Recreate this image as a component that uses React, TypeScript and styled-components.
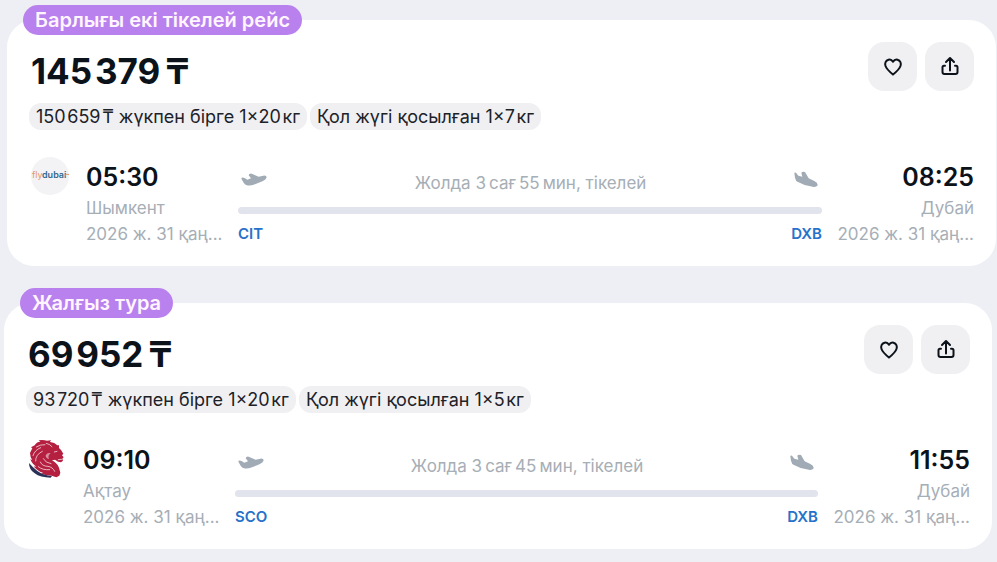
import React from 'react';
import styled, { createGlobalStyle } from 'styled-components';

const GlobalStyle = createGlobalStyle`
  * { box-sizing: border-box; }
  body {
    margin: 0;
    background: #eeeff4;
    color: #0c1219;
    font-family: Inter, "Liberation Sans", sans-serif;
  }
`;

const Results = styled.main`
  display: flex;
  flex-direction: column;
  gap: 37px;
  padding: 20px 0 12px;
`;

const Card = styled.article<{ $left: number; $right: number }>`
  position: relative;
  margin: 0 ${(p) => p.$right}px 0 ${(p) => p.$left}px;
  padding: 22px 22px 19px;
  border-radius: 27px;
  background: #fff;
`;

const Badge = styled.span`
  position: absolute;
  top: -15px;
  left: 16px;
  padding: 0 12px;
  border-radius: 15px;
  background: #b881ee;
  color: #fff5ff;
  font-size: 20px;
  font-weight: 600;
  line-height: 30px;
  white-space: nowrap;
`;

const Header = styled.header`
  display: flex;
  justify-content: space-between;
  align-items: flex-start;
`;

const Price = styled.h2`
  margin: 0 0 3px 2px;
  font-size: 35px;
  font-weight: 700;
  line-height: 58px;
  white-space: nowrap;
`;

const Chips = styled.div`
  display: flex;
  gap: 3px;
`;

const Chip = styled.span`
  padding: 0 7px;
  border-radius: 12px;
  background: #f0f0f3;
  color: #1d2228;
  font-size: 18px;
  line-height: 27px;
  white-space: nowrap;
`;

const Actions = styled.div`
  display: flex;
  gap: 8px;
`;

const ActionButton = styled.button`
  display: flex;
  align-items: center;
  justify-content: center;
  width: 49px;
  height: 49px;
  padding: 0;
  border: 0;
  border-radius: 16px;
  background: #f0f0f3;
  color: #0c1219;
  cursor: pointer;
`;

const Segment = styled.div`
  display: grid;
  grid-template-columns: 38px 140px minmax(0, 1fr) 140px;
  column-gap: 12px;
  margin: 27px 0 0 2px;
`;

const Logo = styled.div`
  height: 38px;
  svg { display: block; }
`;

const Stop = styled.div<{ $end?: boolean }>`
  display: flex;
  flex-direction: column;
  align-items: ${(p) => (p.$end ? 'flex-end' : 'flex-start')};
  padding: 2px 0 0 ${(p) => (p.$end ? 0 : 5)}px;
  white-space: nowrap;
`;

const Time = styled.time`
  font-size: 25px;
  font-weight: 600;
  line-height: 36px;
`;

const Detail = styled.span`
  color: #a6aeb6;
  font-size: 17px;
  line-height: 26px;
`;

const Track = styled.div`
  padding: 2px 0 0 5px;
`;

const TrackTop = styled.div`
  display: flex;
  align-items: center;
  justify-content: space-between;
  height: 48px;
  padding: 0 4px 0 3px;
  color: #a1abb5;
  svg { display: block; }
`;

const Duration = styled.span`
  color: #a6aeb6;
  font-size: 17px;
  white-space: nowrap;
`;

const Bar = styled.div`
  height: 7px;
  margin-bottom: 7px;
  border-radius: 4px;
  background: #e1e4ec;
`;

const Codes = styled.div`
  display: flex;
  justify-content: space-between;
  color: #2672ca;
  font-size: 15px;
  font-weight: 600;
  line-height: 26px;
`;

const HeartIcon = () => (
  <svg width="22" height="22" viewBox="0 0 22 22" fill="none" stroke="currentColor" strokeWidth="2" strokeLinejoin="round" aria-hidden="true">
    <path d="M11 5.8C9.9 4 8.2 3.2 6.5 3.7C3.7 4.5 2.5 7.3 3.5 10C4.8 13.4 8 16.1 11 18.6C14 16.1 17.2 13.4 18.5 10C19.5 7.3 18.3 4.5 15.5 3.7C13.8 3.2 12.1 4 11 5.8Z" />
  </svg>
);

const ShareIcon = () => (
  <svg width="22" height="22" viewBox="0 0 22 22" fill="none" stroke="currentColor" strokeWidth="2" strokeLinecap="round" strokeLinejoin="round" aria-hidden="true">
    <path d="M11 14.5V2.7M7 6L11 2L15 6M6 9.7H5C4 9.7 3.5 10.3 3.5 11.2V16C3.5 17.3 4.2 18 5.5 18H16.5C17.8 18 18.5 17.3 18.5 16V11.2C18.5 10.3 18 9.7 17 9.7H16" />
  </svg>
);

const DepartIcon = () => (
  <svg width="26" height="20" viewBox="0 0 78 60" fill="currentColor" aria-hidden="true">
    <path d="M1 17Q1 13 8 14L12 16L19 20L30 16L23 7Q24 1 32 2L53 11L67 8Q77 7 77 13Q76 19 66 24L42 34Q28 39 18 37Q12 36 8 29Z" />
  </svg>
);

const ArriveIcon = () => (
  <svg width="24" height="24" viewBox="0 0 72 72" fill="currentColor" aria-hidden="true">
    <path d="M1 7Q1 3 6 5L13 14L25 17L22 5Q25 1 33 3L44 22L61 30Q71 35 71 41Q70 47 60 48Q46 45 32 42L12 33Q5 30 3 20Z" />
  </svg>
);

const FlydubaiLogo = () => (
  <svg width="38" height="38" viewBox="0 0 38 38" role="img" aria-label="flydubai">
    <circle cx="19" cy="19" r="19" fill="#f3f3f6" />
    <text x="1" y="21" fontFamily="Inter, sans-serif" fontSize="9" fill="#e39668">fly</text>
    <text x="11" y="21" fontFamily="Inter, sans-serif" fontSize="9" fontWeight="600" fill="#34698f">dubai</text>
    <path d="M34 18.5Q35.5 16.5 38 17.5" stroke="#e39668" fill="none" />
  </svg>
);

const ScatLogo = () => (
  <svg width="38" height="38" viewBox="25 30 114 114" role="img" aria-label="SCAT">
    <path d="M31 69L38 55L34 52L45 46Q50 36 62 35L57 31Q70 29 82 32L94 31L91 36Q105 37 113 46L118 46L118 54L124 60L131 71L127 76L132 82L128 86L130 92L124 97L115 95L106 89L97 91Q112 99 118 113L122 128L119 137L110 142Q91 134 79 136L64 130L71 129Q50 122 42 109L50 110Q36 101 32 87L38 91Q31 80 31 69Z" fill="#b51f40" />
    <path d="M40 77Q45 60 63 53M48 93Q47 74 68 64M50 51Q62 43 76 44M80 40Q92 43 97 50M62 96Q67 109 85 109Q99 111 105 124M56 110Q68 121 90 119M71 86Q77 99 94 101M104 66L112 64M116 89L126 88" fill="none" stroke="#fff" strokeWidth="2" strokeLinecap="round" />
    <path d="M78 76Q85 66 93 70Q83 77 88 87Q78 86 78 76Z" fill="#fff" fillOpacity="0.5" />
    <path d="M28 99Q40 113 53 123Q72 136 97 138L93 143Q62 143 45 130Q28 119 28 99Z" fill="#2b3057" />
  </svg>
);

interface Ticket {
  badge: string;
  price: string;
  chips: string[];
  logo: React.ReactNode;
  from: { time: string; city: string; code: string };
  to: { time: string; city: string; code: string };
  duration: string;
  left: number;
  right: number;
}

const DATE = '2026 ж. 31 қаң...';

const tickets: Ticket[] = [
  {
    badge: 'Барлығы екі тікелей рейс',
    price: '145\u200a379\u2009₸',
    chips: ['150\u200a659\u200a₸ жүкпен бірге 1×20\u200aкг', 'Қол жүгі қосылған 1×7\u200aкг'],
    logo: <FlydubaiLogo />,
    from: { time: '05:30', city: 'Шымкент', code: 'CIT' },
    to: { time: '08:25', city: 'Дубай', code: 'DXB' },
    duration: 'Жолда 3\u2009сағ\u200955\u2009мин, тікелей',
    left: 7,
    right: 1,
  },
  {
    badge: 'Жалғыз тура',
    price: '69\u200a952\u2009₸',
    chips: ['93\u200a720\u200a₸ жүкпен бірге 1×20\u200aкг', 'Қол жүгі қосылған 1×5\u200aкг'],
    logo: <ScatLogo />,
    from: { time: '09:10', city: 'Ақтау', code: 'SCO' },
    to: { time: '11:55', city: 'Дубай', code: 'DXB' },
    duration: 'Жолда 3\u2009сағ\u200945\u2009мин, тікелей',
    left: 4,
    right: 5,
  },
];

const TicketCard = ({ ticket }: { ticket: Ticket }) => (
  <Card $left={ticket.left} $right={ticket.right}>
    <Badge>{ticket.badge}</Badge>
    <Header>
      <div>
        <Price>{ticket.price}</Price>
        <Chips>
          {ticket.chips.map((chip) => (
            <Chip key={chip}>{chip}</Chip>
          ))}
        </Chips>
      </div>
      <Actions>
        <ActionButton type="button" aria-label="Таңдаулыларға қосу"><HeartIcon /></ActionButton>
        <ActionButton type="button" aria-label="Бөлісу"><ShareIcon /></ActionButton>
      </Actions>
    </Header>
    <Segment>
      <Logo>{ticket.logo}</Logo>
      <Stop>
        <Time>{ticket.from.time}</Time>
        <Detail>{ticket.from.city}</Detail>
        <Detail>{DATE}</Detail>
      </Stop>
      <Track>
        <TrackTop>
          <DepartIcon />
          <Duration>{ticket.duration}</Duration>
          <ArriveIcon />
        </TrackTop>
        <Bar />
        <Codes>
          <span>{ticket.from.code}</span>
          <span>{ticket.to.code}</span>
        </Codes>
      </Track>
      <Stop $end>
        <Time>{ticket.to.time}</Time>
        <Detail>{ticket.to.city}</Detail>
        <Detail>{DATE}</Detail>
      </Stop>
    </Segment>
  </Card>
);

export default function App() {
  return (
    <>
      <GlobalStyle />
      <Results>
        {tickets.map((ticket) => (
          <TicketCard key={ticket.badge} ticket={ticket} />
        ))}
      </Results>
    </>
  );
}
